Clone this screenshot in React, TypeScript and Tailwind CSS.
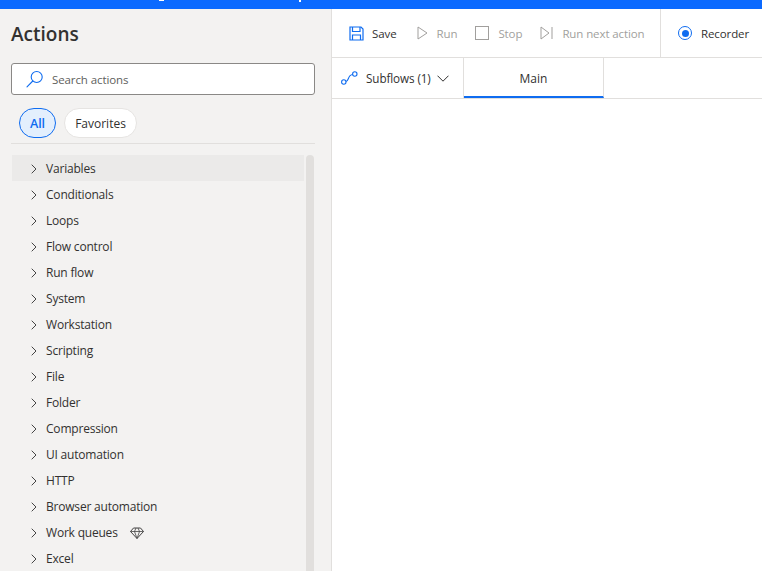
const font = "font-['Open_Sans','Liberation_Sans',sans-serif]";

const actions = [
  "Variables",
  "Conditionals",
  "Loops",
  "Flow control",
  "Run flow",
  "System",
  "Workstation",
  "Scripting",
  "File",
  "Folder",
  "Compression",
  "UI automation",
  "HTTP",
  "Browser automation",
  "Work queues",
  "Excel",
];

function Diamond() {
  return (
    <svg width="14" height="14" viewBox="0 0 14 14" fill="none" stroke="#444" strokeWidth="1" className="ml-[12px] shrink-0">
      <path d="M3.5 2h7l3 3.5L7 12.5.5 5.5 3.5 2z" />
      <path d="M.5 5.5h13M4.5 5.5 7 12.5l2.5-7M4.5 5.5 6 2M9.5 5.5 8 2" strokeWidth="0.8" />
    </svg>
  );
}

function ActionRow({ name, active }: { name: string; active: boolean }) {
  return (
    <div className={`flex h-[26px] items-center pt-[2px] pl-[19px] ${active ? "bg-[#ebeae9]" : ""}`}>
      <svg width="6" height="10" viewBox="0 0 6 10" fill="none" stroke="#444" strokeWidth="1" className="mr-[9px] shrink-0">
        <path d="M.7.7 5 5 .7 9.3" />
      </svg>
      <span className="text-[12px] font-medium tracking-[-0.2px] text-[#323130]">{name}</span>
      {name === "Work queues" && <Diamond />}
    </div>
  );
}

function ToolButton({ icon, label, muted }: { icon: React.ReactNode; label: string; muted?: boolean }) {
  return (
    <div className="flex items-center">
      {icon}
      <span className={`pt-[2px] text-[11.5px] tracking-[-0.1px] ${muted ? "text-[#a19f9d]" : "text-[#323130]"}`}>{label}</span>
    </div>
  );
}

export default function App() {
  return (
    <div className={`flex h-[571px] w-[762px] flex-col overflow-hidden bg-white ${font}`}>
      <div className="relative h-[9px] shrink-0 bg-[#0b6aff]">
        <div className="absolute top-0 left-[159px] h-px w-[5px] bg-white" />
        <div className="absolute top-0 left-[299px] h-[2px] w-[2px] bg-white" />
      </div>
      <div className="flex min-h-0 flex-1">
        {/* Actions pane */}
        <aside className="flex w-[332px] shrink-0 flex-col border-r border-[#e1dfdd] bg-[#f3f2f1] pl-[11px] pr-[16px]">
          <h1 className="mt-[12px] text-[19px] leading-[26px] font-semibold text-[#323130]">Actions</h1>
          <div className="mt-[16px] flex h-[32px] w-[304px] items-center rounded-[3px] border border-[#8a8886] bg-white pl-[14px]">
            <svg width="18" height="18" viewBox="0 0 18 18" fill="none" stroke="#0f6cf0" strokeWidth="1.1">
              <circle cx="10.7" cy="7" r="5.5" />
              <path d="M6.8 11 1 16.8" strokeLinecap="round" />
            </svg>
            <span className="ml-[8px] pt-[2px] text-[11.5px] tracking-[-0.1px] text-[#605e5c]">Search actions</span>
          </div>
          <div className="mt-[13px] flex w-[304px] gap-[8px] border-b border-[#e1dfdd] pb-[5px] pl-[8px]">
            <div className="flex h-[30px] w-[37px] items-center justify-center rounded-full border border-[#0f6cf0] bg-[#e3effd] pt-[2px] text-[12.5px] font-semibold text-[#0f6cf0]">All</div>
            <div className="flex h-[30px] w-[73px] items-center justify-center rounded-full border border-[#e6e4e2] bg-white pt-[2px] text-[12px] text-[#323130]">Favorites</div>
          </div>
          <div className="mt-[11px] flex min-h-0 flex-1 items-start">
            <div className="w-[293px] shrink-0 pl-px">
              {actions.map((name, i) => (
                <ActionRow key={name} name={name} active={i === 0} />
              ))}
            </div>
            <div className="ml-[2px] h-full w-[8px] rounded-t-full bg-[#e1dfdd]" />
          </div>
        </aside>

        {/* Designer */}
        <main className="flex min-w-0 flex-1 flex-col">
          <div className="flex h-[49px] shrink-0 items-center border-b border-[#e1dfdd]">
            <div className="flex flex-1 items-center gap-[18px] pl-[17px]">
              <ToolButton
                label="Save"
                icon={
                  <svg width="15" height="15" viewBox="0 0 15 15" fill="none" stroke="#0f6cf0" strokeWidth="1.2" className="mr-[8px]">
                    <path d="M1 1h11l2 2v11H1z" />
                    <path d="M3.5 1v4.5h7.5V1M3.5 14V9h8v5" />
                  </svg>
                }
              />
              <ToolButton
                label="Run"
                muted
                icon={
                  <svg width="11" height="14" viewBox="0 0 11 14" fill="none" stroke="#a19f9d" strokeWidth="1" className="mr-[9px] ml-[2px]">
                    <path d="M1 1v12l9-6z" />
                  </svg>
                }
              />
              <ToolButton
                label="Stop"
                muted
                icon={<div className="mr-[9px] h-[14px] w-[14px] border border-[#a19f9d]" />}
              />
              <ToolButton
                label="Run next action"
                muted
                icon={
                  <svg width="13" height="14" viewBox="0 0 13 14" fill="none" stroke="#a19f9d" strokeWidth="1" className="mr-[9px]">
                    <path d="M1 1v12l8-6zM12 1v12" />
                  </svg>
                }
              />
            </div>
            <div className="flex h-full w-[102px] items-center border-l border-[#e1dfdd] pl-[17px]">
              <div className="mr-[9px] flex h-[14px] w-[14px] items-center justify-center rounded-full border border-[#0f6cf0]">
                <div className="h-[7px] w-[7px] rounded-full bg-[#0f6cf0]" />
              </div>
              <span className="pt-[2px] text-[11.5px] tracking-[-0.1px] text-[#323130]">Recorder</span>
            </div>
          </div>
          <div className="flex h-[41px] shrink-0 border-b border-[#e1dfdd]">
            <div className="flex w-[132px] items-center border-r border-[#e1dfdd] pl-[9px]">
              <svg width="17" height="14" viewBox="0 0 17 14" fill="none" stroke="#0f6cf0" strokeWidth="1.1" className="mr-[8px]">
                <circle cx="2.8" cy="11" r="2.2" />
                <circle cx="13.8" cy="3" r="2.2" />
                <path d="M5 10.5c3 0 1.5-6.5 6.6-7" />
              </svg>
              <span className="pt-[2px] text-[11.7px] font-medium tracking-[-0.1px] text-[#323130]">Subflows (1)</span>
              <svg width="12" height="7" viewBox="0 0 12 7" fill="none" stroke="#323130" strokeWidth="1" className="ml-[6px]">
                <path d="M.5.7 6 6.2 11.5.7" />
              </svg>
            </div>
            <div className="flex w-[140px] items-center justify-center border-r border-b-2 border-r-[#e1dfdd] border-b-[#0f6cf0] pt-[4px] text-[12px] font-medium text-[#323130]">
              Main
            </div>
          </div>
        </main>
      </div>
    </div>
  );
}
